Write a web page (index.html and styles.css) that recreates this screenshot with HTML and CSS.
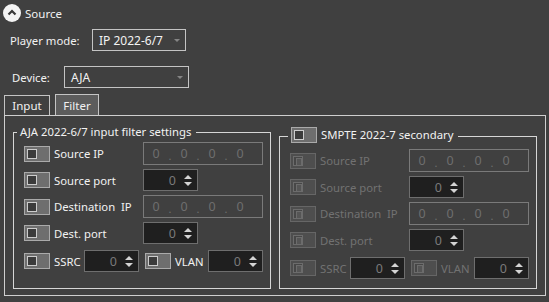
FILE: index.html
```html
<!DOCTYPE html>
<html lang="en">

<head>
    <meta charset="UTF-8">
    <title>Source</title>
    <link rel="stylesheet" href="styles.css">
</head>

<body>
    <div class="header">
        <span class="collapse-icon">
            <svg width="18" height="18" viewBox="0 0 18 18">
                <circle cx="9" cy="9" r="9" fill="#f4f4f4" />
                <path d="M5.5 10.5 L9 7 L12.5 10.5" fill="none" stroke="#3a3a3a" stroke-width="2.2" />
            </svg>
        </span>
        <span class="header-title">Source</span>
    </div>

    <div class="form-row mode-row">
        <label class="form-label mode-label">Player mode:</label>
        <div class="combo mode-combo">IP 2022-6/7<span class="combo-arrow"></span></div>
    </div>

    <div class="form-row device-row">
        <label class="form-label device-label">Device:</label>
        <div class="combo device-combo">AJA<span class="combo-arrow"></span></div>
    </div>

    <div class="tab-bar">
        <div class="tab">Input</div>
        <div class="tab tab-active">Filter</div>
    </div>

    <div class="tab-pane">
        <fieldset class="group group-left">
            <legend class="group-title">AJA 2022-6/7 input filter settings</legend>
            <div class="filter-grid">
                <span class="toggle"><span class="knob"></span></span>
                <span class="row-label">Source IP</span>
                <div class="ip-box"><span>0</span><span class="dot">.</span><span>0</span><span class="dot">.</span><span>0</span><span class="dot">.</span><span>0</span></div>

                <span class="toggle"><span class="knob"></span></span>
                <span class="row-label">Source port</span>
                <div class="spin">0<span class="spin-arrows"></span></div>

                <span class="toggle"><span class="knob"></span></span>
                <span class="row-label">Destination&nbsp; IP</span>
                <div class="ip-box"><span>0</span><span class="dot">.</span><span>0</span><span class="dot">.</span><span>0</span><span class="dot">.</span><span>0</span></div>

                <span class="toggle"><span class="knob"></span></span>
                <span class="row-label">Dest. port</span>
                <div class="spin">0<span class="spin-arrows"></span></div>
            </div>
            <div class="stream-row">
                <span class="toggle"><span class="knob"></span></span>
                <span class="row-label ssrc-label">SSRC</span>
                <div class="spin">0<span class="spin-arrows"></span></div>
                <span class="toggle toggle-second"><span class="knob"></span></span>
                <span class="row-label vlan-label">VLAN</span>
                <div class="spin">0<span class="spin-arrows"></span></div>
            </div>
        </fieldset>

        <fieldset class="group group-right disabled">
            <legend class="group-title check-title">
                <span class="toggle"><span class="knob"></span></span>
                <span>SMPTE 2022-7 secondary</span>
            </legend>
            <div class="filter-grid">
                <span class="toggle off"><span class="knob"></span></span>
                <span class="row-label">Source IP</span>
                <div class="ip-box"><span>0</span><span class="dot">.</span><span>0</span><span class="dot">.</span><span>0</span><span class="dot">.</span><span>0</span></div>

                <span class="toggle off"><span class="knob"></span></span>
                <span class="row-label">Source port</span>
                <div class="spin">0<span class="spin-arrows"></span></div>

                <span class="toggle off"><span class="knob"></span></span>
                <span class="row-label">Destination&nbsp; IP</span>
                <div class="ip-box"><span>0</span><span class="dot">.</span><span>0</span><span class="dot">.</span><span>0</span><span class="dot">.</span><span>0</span></div>

                <span class="toggle off"><span class="knob"></span></span>
                <span class="row-label">Dest. port</span>
                <div class="spin">0<span class="spin-arrows"></span></div>
            </div>
            <div class="stream-row">
                <span class="toggle off"><span class="knob"></span></span>
                <span class="row-label ssrc-label">SSRC</span>
                <div class="spin">0<span class="spin-arrows"></span></div>
                <span class="toggle off toggle-second"><span class="knob"></span></span>
                <span class="row-label vlan-label">VLAN</span>
                <div class="spin">0<span class="spin-arrows"></span></div>
            </div>
        </fieldset>
    </div>
</body>

</html>
```

FILE: styles.css
```css
* {
    margin: 0;
    padding: 0;
    box-sizing: border-box;
}

body {
    width: 549px;
    height: 302px;
    overflow: hidden;
    background-color: #404040;
    color: #f2f2f2;
    font-family: 'Noto Sans', 'Open Sans', sans-serif;
    font-size: 11.3px;
}

/* header */

.header {
    display: flex;
    align-items: center;
    height: 18px;
    margin-top: 4px;
    padding-left: 3px;
}

.collapse-icon {
    display: flex;
    width: 18px;
    height: 18px;
}

.header-title {
    margin-left: 4px;
    font-size: 11.5px;
}

/* player mode / device rows */

.form-row {
    display: flex;
    align-items: center;
}

.mode-row {
    margin-top: 7px;
    padding-left: 10px;
}

.device-row {
    margin-top: 15px;
    padding-left: 12px;
}

.mode-label {
    width: 82px;
}

.device-label {
    width: 52px;
}

.combo {
    position: relative;
    display: flex;
    align-items: center;
    height: 22px;
    padding-left: 6px;
    border: 1px solid #c4c4c4;
    font-size: 12px;
}

.mode-combo {
    width: 94px;
}

.device-combo {
    width: 125px;
}

.combo-arrow {
    position: absolute;
    right: 5px;
    top: 9px;
    border-left: 3px solid transparent;
    border-right: 3px solid transparent;
    border-top: 3px solid #858585;
}

/* tabs */

.tab-bar {
    display: flex;
    align-items: flex-end;
    gap: 5px;
    height: 21px;
    margin-top: 6px;
    padding-left: 4px;
}

.tab {
    display: flex;
    align-items: center;
    justify-content: center;
    width: 46px;
    height: 20px;
    border: 1px solid #c4c4c4;
    border-bottom: none;
    font-size: 11.5px;
}

.tab-active {
    width: 44px;
    height: 21px;
    background-color: #5c5c5c;
}

.tab-pane {
    display: flex;
    align-items: flex-start;
    gap: 8px;
    width: 542px;
    height: 181px;
    margin-left: 4px;
    padding: 0 8px;
    border: 1px solid #cfcfcf;
}

/* group boxes */

.group {
    width: 258px;
    padding: 0;
    border: 1px solid #d6d6d6;
}

.group-left {
    height: 165px;
    margin-top: 8px;
}

.group-right {
    height: 162px;
    margin-top: 11px;
}

.group-title {
    margin-left: 3px;
    padding: 0 5px 0 3px;
    line-height: 16px;
}

.check-title {
    display: flex;
    align-items: center;
    gap: 4px;
    height: 18px;
    margin-left: 8px;
    padding: 0 5px 2px 3px;
}

.filter-grid {
    display: grid;
    grid-template-columns: 26px 85px auto;
    column-gap: 4px;
    row-gap: 4px;
    align-items: center;
    margin-left: 10px;
}

.group-left .filter-grid {
    margin-top: 2px;
}

.group-right .filter-grid {
    margin-top: 4px;
}

.row-label {
    white-space: nowrap;
}

.disabled .row-label {
    color: #727272;
}

.stream-row {
    display: flex;
    align-items: center;
    margin: 6px 0 0 10px;
}

.ssrc-label {
    width: 26px;
    margin-left: 4px;
}

.vlan-label {
    width: 29px;
    margin-left: 4px;
}

.stream-row .spin {
    margin-left: 4px;
}

.toggle-second {
    margin-left: 6px;
}

/* toggle switch */

.toggle {
    display: block;
    flex: none;
    width: 26px;
    height: 16px;
    padding: 2px;
    border: 1px solid #aaaaaa;
    background-color: #6e6e6e;
}

.knob {
    display: block;
    width: 10px;
    height: 10px;
    border: 1px solid #cccccc;
    background-color: #3b3b3b;
}

.toggle.off {
    border-color: #666666;
    background-color: #4e4e4e;
}

.toggle.off .knob {
    position: relative;
    border-color: #6c6c6c;
    background-color: #474747;
}

.toggle.off .knob::after {
    content: "";
    position: absolute;
    left: 2px;
    top: 1px;
    width: 4px;
    height: 6px;
    border: 1px solid #6c6c6c;
    background-color: #555555;
}

/* inputs */

.ip-box {
    display: flex;
    align-items: center;
    width: 120px;
    height: 23px;
    padding-left: 5px;
    border: 1px solid #7a7a7a;
    color: #6e6e6e;
    font-size: 12.5px;
}

.ip-box span {
    width: 14px;
    text-align: center;
}

.ip-box .dot {
    padding-top: 4px;
    font-size: 11px;
}

.spin {
    position: relative;
    display: flex;
    align-items: center;
    justify-content: flex-end;
    flex: none;
    width: 55px;
    height: 22px;
    padding-right: 21px;
    border: 1px solid #6e6e6e;
    background-color: #1f1f1f;
    color: #7a7a7a;
    font-size: 12.5px;
}

.spin-arrows {
    position: absolute;
    right: 5px;
    top: 4px;
    width: 8px;
    height: 12px;
}

.spin-arrows::before,
.spin-arrows::after {
    content: "";
    position: absolute;
    left: 0;
    border-left: 4px solid transparent;
    border-right: 4px solid transparent;
}

.spin-arrows::before {
    top: 1px;
    border-bottom: 4px solid #d4d4d4;
}

.spin-arrows::after {
    bottom: 0;
    border-top: 4px solid #d4d4d4;
}
```
